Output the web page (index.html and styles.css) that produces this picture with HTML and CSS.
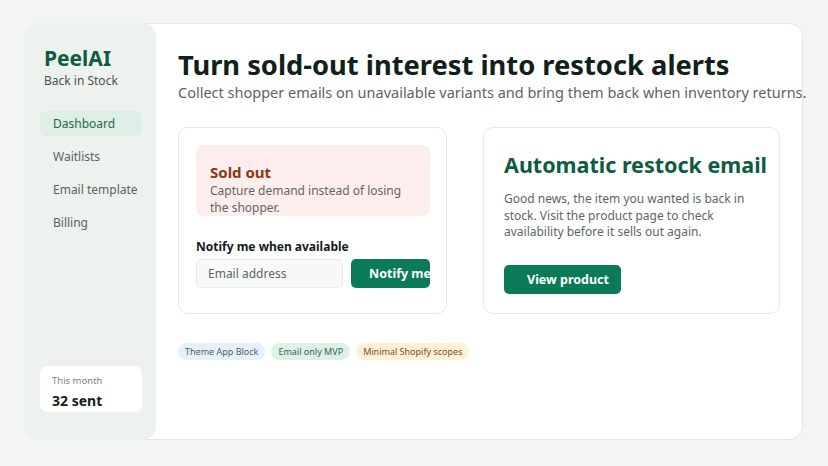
FILE: index.html
```html
<!DOCTYPE html>
<html lang="en">
<head>
  <meta charset="UTF-8">
  <meta name="viewport" content="width=device-width, initial-scale=1.0">
  <title>PeelAI - Back in Stock</title>
  <link rel="stylesheet" href="styles.css">
</head>
<body>
  <div class="app">
    <aside class="sidebar">
      <div class="brand">
        <h2>PeelAI</h2>
        <p>Back in Stock</p>
      </div>
      <nav class="nav">
        <a class="nav-item active">Dashboard</a>
        <a class="nav-item">Waitlists</a>
        <a class="nav-item">Email template</a>
        <a class="nav-item">Billing</a>
      </nav>
      <div class="stat">
        <span class="stat-label">This month</span>
        <strong class="stat-value">32 sent</strong>
      </div>
    </aside>

    <main class="main">
      <h1>Turn sold-out interest into restock alerts</h1>
      <p class="lead">Collect shopper emails on unavailable variants and bring them back when inventory returns.</p>

      <div class="cards">
        <div class="card">
          <div class="soldout">
            <h3>Sold out</h3>
            <p>Capture demand instead of losing the shopper.</p>
          </div>
          <label class="form-label">Notify me when available</label>
          <div class="form-row">
            <input class="email" type="text" placeholder="Email address">
            <button class="btn btn-notify">Notify me</button>
          </div>
        </div>

        <div class="card card-email">
          <h2>Automatic restock email</h2>
          <p>Good news, the item you wanted is back in stock. Visit the product page to check availability before it sells out again.</p>
          <button class="btn">View product</button>
        </div>
      </div>

      <div class="tags">
        <span class="tag tag-blue">Theme App Block</span>
        <span class="tag tag-green">Email only MVP</span>
        <span class="tag tag-amber">Minimal Shopify scopes</span>
      </div>
    </main>
  </div>
</body>
</html>
```

FILE: styles.css
```css
* { margin: 0; padding: 0; box-sizing: border-box; }
body {
  font-family: 'Noto Sans', 'Open Sans', sans-serif;
  background: #f3f5f4;
  padding: 23px 25px 26px;
  color: #1a2320;
  height: 466px;
  overflow: hidden;
}
.app {
  display: flex;
  width: 778px;
  height: 417px;
  background: white;
  border: 1px solid #e1e7e4;
  border-radius: 14px;
}
.sidebar {
  width: 131px;
  flex-shrink: 0;
  margin: -1px 0 -1px -1px;
  background: #edf2ef;
  border-radius: 14px;
  padding: 22px 14px 28px 15px;
  display: flex;
  flex-direction: column;
}
.brand {
  padding-left: 4px;
}
.brand h2 {
  font-size: 21px;
  line-height: 27px;
  font-weight: 700;
  color: #0d5c3f;
}
.brand p {
  margin-top: 1px;
  font-size: 12px;
  line-height: 16px;
  color: #4a524f;
}
.nav {
  margin-top: 22px;
  display: flex;
  flex-direction: column;
  gap: 8px;
}
.nav-item {
  display: block;
  height: 25px;
  line-height: 25px;
  padding-left: 13px;
  font-size: 12px;
  color: #5b6360;
  border-radius: 6px;
}
.nav-item.active {
  background: #deefe5;
  color: #1c6a4c;
}
.stat {
  margin-top: auto;
  background: white;
  border-radius: 7px;
  height: 46px;
  padding: 8px 12px;
  display: flex;
  flex-direction: column;
}
.stat-label {
  font-size: 9.5px;
  line-height: 13px;
  color: #7b8380;
}
.stat-value {
  margin-top: 4px;
  font-size: 14px;
  line-height: 20px;
  color: #141c19;
}
.main {
  flex: 1;
  padding: 23px 22px 0 22px;
  min-width: 0;
}
.main h1 {
  font-size: 27.3px;
  line-height: 36px;
  font-weight: 700;
  color: #10201a;
  white-space: nowrap;
}
.lead {
  font-size: 14.5px;
  line-height: 18px;
  color: #5c6461;
  white-space: nowrap;
}
.cards {
  margin-top: 26px;
  display: grid;
  grid-template-columns: 269px 297px;
  gap: 36px;
  height: 187px;
}
.card {
  border: 1px solid #e4e9e6;
  border-radius: 10px;
  padding: 17px 16px 0 17px;
}
.soldout {
  background: #fdeeed;
  border-radius: 7px;
  height: 71px;
  padding: 17px 20px 0 14px;
}
.soldout h3 {
  font-size: 15px;
  line-height: 21px;
  color: #8a3814;
}
.soldout p {
  font-size: 12px;
  line-height: 16.5px;
  color: #5e6663;
}
.form-label {
  display: block;
  margin-top: 23px;
  font-size: 12px;
  line-height: 16px;
  font-weight: 700;
  color: #141c19;
}
.form-row {
  margin-top: 4px;
  display: flex;
  gap: 8px;
}
.email {
  width: 147px;
  height: 29px;
  border: 1px solid #e6ebe8;
  background: #f7f9f8;
  border-radius: 5px;
  padding: 0 11px;
  font-family: inherit;
  font-size: 12px;
}
.email::placeholder {
  color: #5e6663;
}
.btn {
  height: 29px;
  background: #0b7a59;
  color: white;
  border: none;
  border-radius: 5px;
  font-family: inherit;
  font-size: 12.5px;
  font-weight: 700;
  padding: 0 0 0 23px;
  text-align: left;
  white-space: nowrap;
  overflow: hidden;
}
.btn-notify {
  width: 79px;
  padding-left: 18px;
}
.card-email {
  padding: 23px 20px 0 20px;
}
.card-email h2 {
  font-size: 21.5px;
  line-height: 28px;
  color: #0d5c40;
  white-space: nowrap;
}
.card-email p {
  margin-top: 12px;
  font-size: 12px;
  line-height: 16.5px;
  color: #5e6663;
}
.card-email .btn {
  margin-top: 24px;
  width: 117px;
}
.tags {
  margin-top: 29px;
  display: flex;
  gap: 6px;
}
.tag {
  height: 17px;
  line-height: 17px;
  padding: 0 7px;
  border-radius: 9px;
  font-size: 9px;
}
.tag-blue { background: #e7effc; color: #3f6a5b; }
.tag-green { background: #def1e7; color: #2f6550; }
.tag-amber { background: #fdf0d6; color: #8a4b20; }
```
